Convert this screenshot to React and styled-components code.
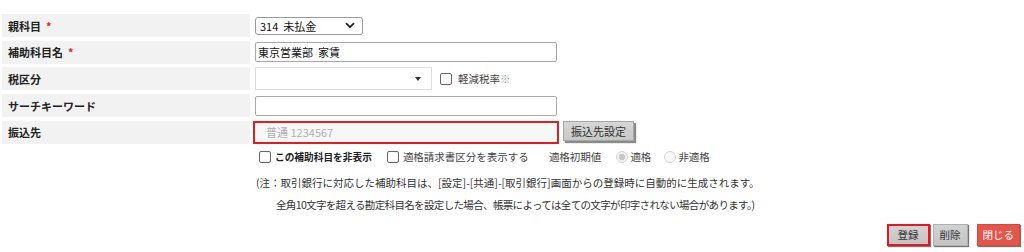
import React from "react";
import styled, { createGlobalStyle } from "styled-components";

const GlobalStyle = createGlobalStyle`
  html, body {
    margin: 0;
    padding: 0;
    background: #fff;
  }
  body {
    font-family: "Noto Sans CJK JP", "Noto Sans", sans-serif;
    font-size: 10.5px;
    color: #222;
  }
`;

const Page = styled.div`
  width: 1024px;
  height: 252px;
  box-sizing: border-box;
  padding: 14px 4px 0 2px;
  display: flex;
  flex-direction: column;
`;

const FormGrid = styled.div`
  display: grid;
  grid-template-columns: 248px 1fr;
  grid-auto-rows: 23px;
  column-gap: 5px;
  row-gap: 3.7px;
`;

const Label = styled.div`
  background: #f2f2f2;
  display: flex;
  align-items: center;
  padding-left: 6px;
  font-weight: bold;
  font-size: 11px;
  color: #222;
`;

const Required = styled.span`
  color: #e8202a;
  margin-left: 5px;
`;

const Field = styled.div`
  display: flex;
  align-items: center;
`;

const FakeSelect = styled.div`
  box-sizing: border-box;
  width: 108px;
  height: 18px;
  border: 1px solid #9a9a9a;
  border-radius: 3px;
  display: flex;
  align-items: center;
  justify-content: space-between;
  padding: 0 7px 0 4px;
  font-size: 11px;
  color: #111;
`;

const TaxSelect = styled.div`
  box-sizing: border-box;
  width: 177px;
  height: 23px;
  border: 1px solid #dcdcdc;
  display: flex;
  align-items: center;
  justify-content: flex-end;
  padding-right: 10px;
  margin-right: 8px;
`;

const TextBox = styled.div`
  box-sizing: border-box;
  width: 302px;
  height: 20px;
  border: 1px solid #a8a8a8;
  border-radius: 2px;
  display: flex;
  align-items: center;
  padding-left: 2px;
  font-size: 11px;
  color: #111;
`;

const TransferBox = styled.div`
  box-sizing: border-box;
  width: 306px;
  height: 23px;
  margin-left: -2px;
  border: 2px solid #e41c1c;
  background: #f7f7f7;
  display: flex;
  align-items: center;
  padding-left: 11px;
  font-size: 11px;
  color: #b0b0b0;
`;

const GrayButton = styled.div`
  box-sizing: border-box;
  height: 20px;
  width: 71px;
  margin-left: 4px;
  margin-top: -2px;
  display: flex;
  align-items: center;
  justify-content: center;
  background: linear-gradient(#d6d6d6, #c8c8c8);
  border: 1px solid #a6a6a6;
  box-shadow: 2px 2px 1px #8a8a8a;
  font-size: 11px;
  color: #333;
`;

const Box = styled.span`
  box-sizing: border-box;
  width: 12px;
  height: 12px;
  border: 1px solid #666;
  border-radius: 2px;
  background: #fff;
  display: inline-block;
  flex: none;
  margin-right: ${p => p.$mr ?? 4}px;
`;

const Radio = styled.span`
  box-sizing: border-box;
  width: 12px;
  height: 12px;
  border-radius: 50%;
  border: 1px solid #d4d4d4;
  background: ${p => (p.$on ? "radial-gradient(circle, #c8c8c8 0 3px, #f4f4f4 3.5px)" : "#f8f8f8")};
  display: inline-block;
  flex: none;
  margin-right: 2px;
`;

const CheckLabel = styled.span`
  font-size: ${p => (p.$bold ? "9.7px" : "10.5px")};
  font-weight: ${p => (p.$bold ? "bold" : "normal")};
  color: ${p => (p.$bold ? "#222" : "#444")};
  margin-right: ${p => p.$mr || 0}px;
  white-space: nowrap;
`;

const Mark = styled.span`
  color: #9a9a9a;
`;

const OptionsRow = styled.div`
  display: flex;
  align-items: center;
  height: 20px;
  margin-top: 3px;
  padding-left: 257px;
`;

const Note = styled.div`
  height: 22px;
  display: flex;
  align-items: center;
  padding-left: ${p => p.$indent}px;
  margin-top: ${p => p.$mt || 0}px;
  font-size: 10.5px;
  letter-spacing: ${p => p.$spacing || 0}px;
  color: #333;
  white-space: nowrap;
`;

const Actions = styled.div`
  display: flex;
  justify-content: flex-end;
  align-items: center;
  margin-top: 8px;
`;

const ActionButton = styled.div`
  box-sizing: border-box;
  height: 22px;
  padding: 0 ${p => p.$px || 6}px;
  display: flex;
  align-items: center;
  font-size: 10.5px;
  background: ${p => (p.$danger ? "#e4554a" : "linear-gradient(#d2d2d2, #c4c4c4)")};
  color: ${p => (p.$danger ? "#fff" : "#333")};
  border: ${p => (p.$focus ? "2px solid #e8161e" : p.$danger ? "1px solid #d9463c" : "1px solid #b0b0b0")};
  box-shadow: 1px 1px 1px #777;
  margin-left: ${p => p.$ml || 0}px;
`;

const Chevron = () => (
  <svg width="10" height="7" viewBox="0 0 10 7">
    <path d="M1 1.2 L5 5.2 L9 1.2" fill="none" stroke="#222" strokeWidth="1.7" />
  </svg>
);

const Caret = () => (
  <svg width="6" height="4" viewBox="0 0 6 4">
    <path d="M0 0 H6 L3 4 Z" fill="#333" />
  </svg>
);

export default function App() {
  return (
    <Page>
      <GlobalStyle />
      <FormGrid>
        <Label>
          親科目<Required>*</Required>
        </Label>
        <Field>
          <FakeSelect>
            <span>314&nbsp;&nbsp;未払金</span>
            <Chevron />
          </FakeSelect>
        </Field>

        <Label>
          補助科目名<Required>*</Required>
        </Label>
        <Field>
          <TextBox>東京営業部&nbsp;&nbsp;家賃</TextBox>
        </Field>

        <Label>税区分</Label>
        <Field>
          <TaxSelect>
            <Caret />
          </TaxSelect>
          <Box $mr={6} />
          <CheckLabel>
            軽減税率<Mark>※</Mark>
          </CheckLabel>
        </Field>

        <Label>サーチキーワード</Label>
        <Field>
          <TextBox />
        </Field>

        <Label>振込先</Label>
        <Field>
          <TransferBox>普通 1234567</TransferBox>
          <GrayButton>振込先設定</GrayButton>
        </Field>
      </FormGrid>

      <OptionsRow>
        <Box />
        <CheckLabel $bold $mr={15}>この補助科目を非表示</CheckLabel>
        <Box />
        <CheckLabel $mr={20}>適格請求書区分を表示する</CheckLabel>
        <CheckLabel $mr={15}>適格初期値</CheckLabel>
        <Radio $on />
        <CheckLabel $mr={13}>適格</CheckLabel>
        <Radio />
        <CheckLabel>非適格</CheckLabel>
      </OptionsRow>

      <Note $indent={254} $mt={5}>
        (注：取引銀行に対応した補助科目は、[設定]-[共通]-[取引銀行]画面からの登録時に自動的に生成されます。
      </Note>
      <Note $indent={274} $spacing={-0.65}>
        全角10文字を超える勘定科目名を設定した場合、帳票によっては全ての文字が印字されない場合があります。)
      </Note>

      <Actions>
        <ActionButton $focus $px={9}>登録</ActionButton>
        <ActionButton $ml={3}>削除</ActionButton>
        <ActionButton $danger $px={5} $ml={9}>閉じる</ActionButton>
      </Actions>
    </Page>
  );
}
